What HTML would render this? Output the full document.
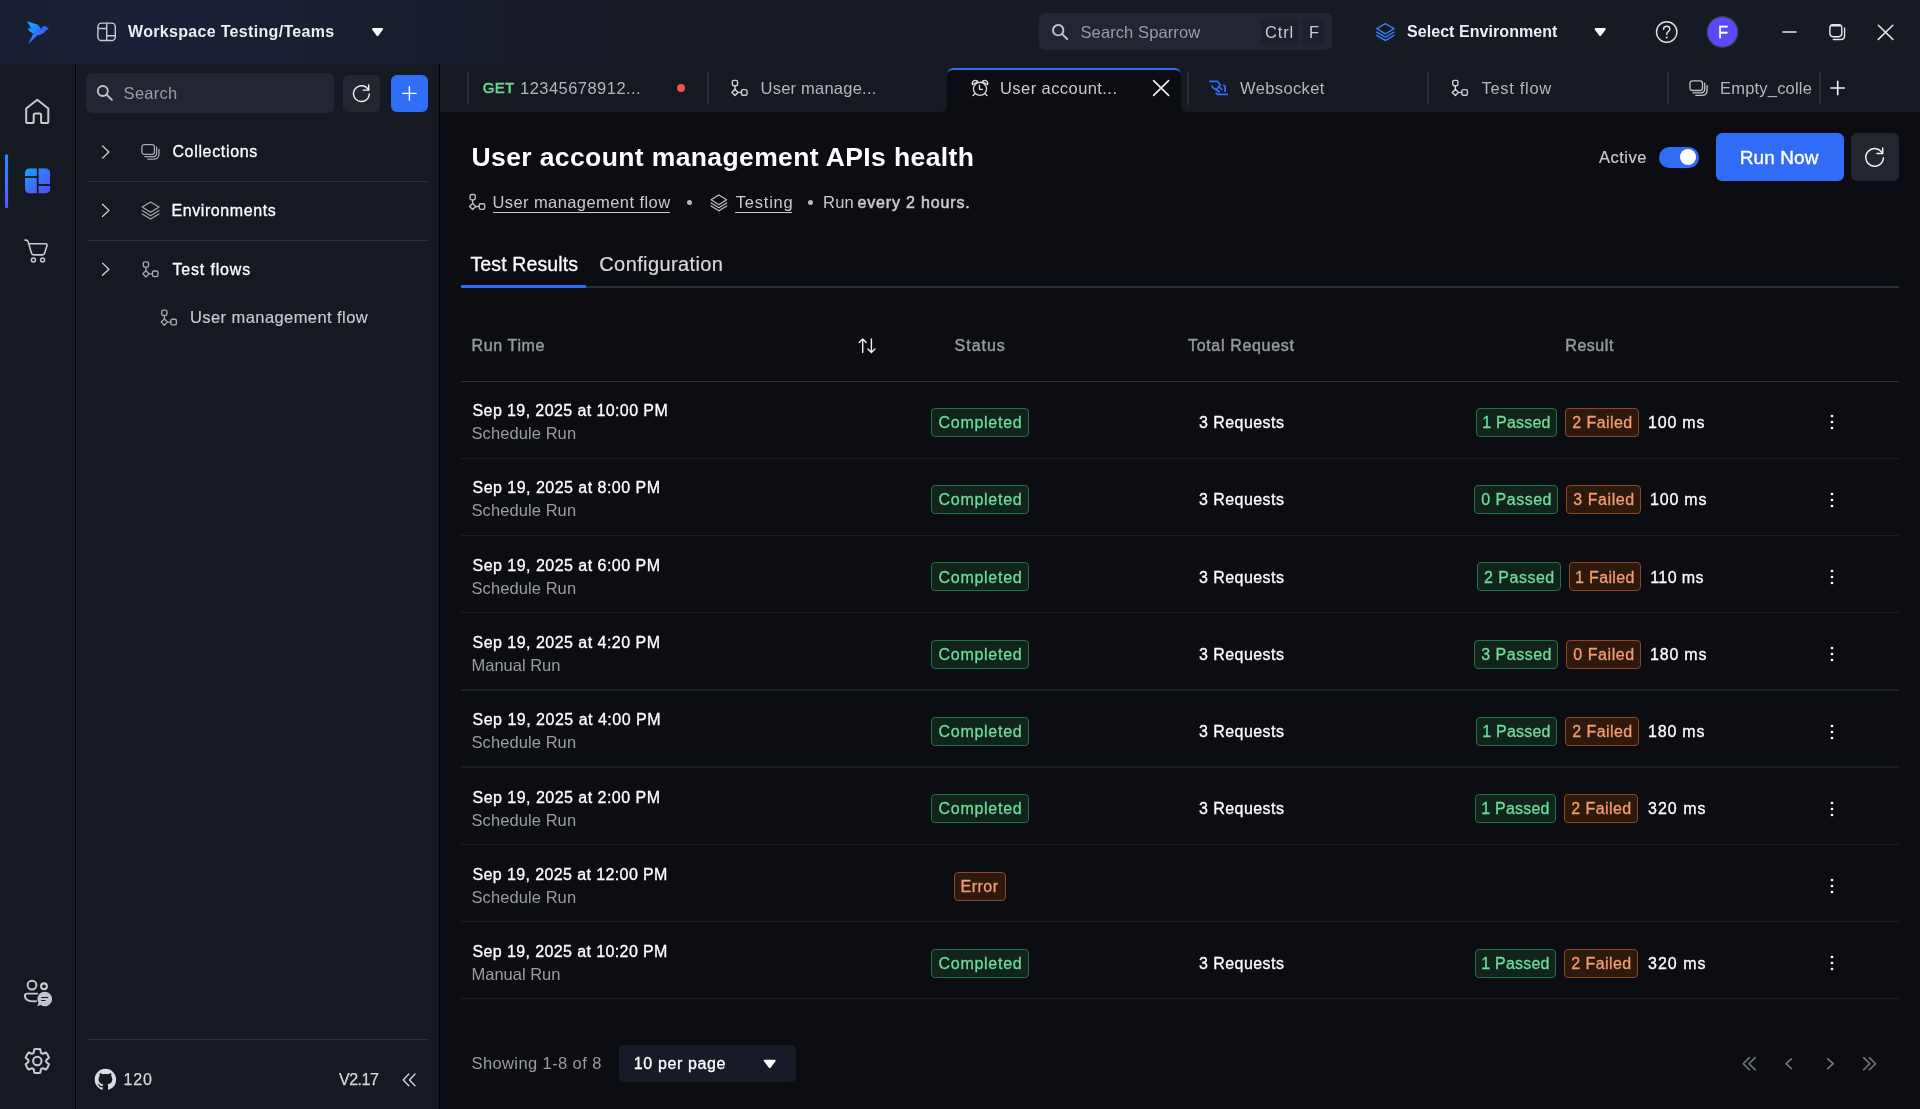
<!DOCTYPE html>
<html><head><meta charset="utf-8"><title>Sparrow</title>
<style>
*{box-sizing:border-box;margin:0;padding:0}
html,body{width:1920px;height:1109px;overflow:hidden;background:#0c0d12}
body{font-family:"Liberation Sans",sans-serif;color:#fff;position:relative}
.a{position:absolute}
#txt{left:0;top:0;width:1920px;height:1109px;will-change:transform}
.t{position:absolute;white-space:pre;line-height:24px;height:24px}
svg{position:absolute;overflow:visible}
#header{left:0;top:0;width:1920px;height:64px;background:linear-gradient(90deg,#181e31 0%,#1a2036 5%,#192034 12%,#181f30 18%,#171d2c 22%,#161b27 26.5%,#161a24 30%,#151a23 34%,#151a23 100%)}
#iconbar{left:0;top:64px;width:75px;height:1045px;background:#151922}
#side{left:76px;top:64px;width:363px;height:1045px;background:#151922}
.vl{background:#000;width:1px;top:64px;height:1045px}
#tabbar{left:440px;top:64px;width:1480px;height:48px;background:#151922}
#main{left:440px;top:112px;width:1480px;height:997px;background:#0c0d12}
.box{border-radius:6px;background:#222630}
.sep{width:2px;background:#282c38;top:71px;height:34px;border-radius:1px}
.hl{height:1.6px;background:#2b2f3a;margin-top:-0.3px}
.rl{height:1.5px;background:#1a1c26;left:461px;width:1438px}
.bp{border:1.2px solid #1f7443;background:#11241b;border-radius:4px;height:29px}
.bf{border:1.2px solid #8c4725;background:#2f180c;border-radius:4px;height:29px}
.g{color:#6fdd99}
.o{color:#f19d6f}
</style>

</head><body>
<div class="a" id="header"></div>
<div class="a" id="iconbar"></div>
<div class="a vl" style="left:75px"></div>
<div class="a" id="side"></div>
<div class="a vl" style="left:439px"></div>
<div class="a" id="tabbar"></div>
<div class="a" id="main"></div>
<svg style="left:0;top:0" width="64" height="64" viewBox="0 0 64 64">
<defs><linearGradient id="gw" x1="27" y1="21" x2="41" y2="33" gradientUnits="userSpaceOnUse"><stop offset="0" stop-color="#16b4ff"/><stop offset="1" stop-color="#2d6cff"/></linearGradient>
<linearGradient id="gb" x1="34" y1="34" x2="49" y2="27" gradientUnits="userSpaceOnUse"><stop offset="0" stop-color="#2d78ff"/><stop offset="1" stop-color="#4458f5"/></linearGradient>
<linearGradient id="gt" x1="36" y1="34" x2="28" y2="44" gradientUnits="userSpaceOnUse"><stop offset="0" stop-color="#3470ff"/><stop offset="1" stop-color="#2a7dff"/></linearGradient></defs>
<path d="M27,21.2 L37.4,24.6 Q40,26.6 41,29.6 L34.2,33.4 Z" fill="url(#gw)"/>
<path d="M27.3,28.5 Q29.5,28 31.6,28.8 L34.4,33.2 L33.2,33.8 Q29.3,31.8 27.3,28.5 Z" fill="#1a9dff"/>
<path d="M33.6,33.6 L40.8,29.6 Q41.8,26.2 45,26 Q47.2,26.3 48.9,29.5 L46.6,30 Q44.4,33.4 39.6,34.9 L36.4,35.3 Z" fill="url(#gb)"/>
<path d="M33.2,33.4 L37.8,35.1 L28.3,43.9 Z" fill="url(#gt)"/>
</svg>
<svg style="left:96px;top:21px" width="22" height="22" viewBox="96 21 22 22" fill="none" stroke="#c9cacd" stroke-width="1.4">
<rect x="97.9" y="23.1" width="17.4" height="17.4" rx="3.6"/><path d="M106.7,23.1V40.5M97.9,28.5H106.7M106.7,35.7H115.3"/></svg>
<div class="a box" style="left:1039px;top:13px;width:293px;height:37px;background:#222633"></div>
<div class="a" style="left:1260.5px;top:19px;width:37.5px;height:26px;border-radius:5px;background:#1d202d"></div>
<div class="a" style="left:1303px;top:19px;width:20.5px;height:26px;border-radius:5px;background:#1d202d"></div>
<div class="a box" style="left:85.5px;top:73.4px;width:248px;height:39.6px"></div>
<div class="a" style="left:343px;top:74.5px;width:37px;height:37.5px;border-radius:5px;background:#232631"></div>
<div class="a" style="left:390.7px;top:74.5px;width:37.3px;height:37.5px;border-radius:6px;background:#306ef6"></div>
<div class="a hl" style="left:87px;top:181px;width:341px"></div>
<div class="a hl" style="left:87px;top:240px;width:341px"></div>
<div class="a hl" style="left:87px;top:1039px;width:341px"></div>
<div class="a sep" style="left:467px"></div>
<div class="a sep" style="left:707px"></div>
<div class="a sep" style="left:1187px"></div>
<div class="a sep" style="left:1427px"></div>
<div class="a sep" style="left:1667px"></div>
<div class="a sep" style="left:1819px"></div>
<div class="a" style="left:947px;top:68px;width:234px;height:44px;background:#0c0d12;border-radius:6px 6px 0 0;border-top:2px solid #316cf6"></div>
<div class="a" style="left:941px;top:106px;width:6px;height:6px;background:#0c0d12"></div><div class="a" style="left:941px;top:106px;width:6px;height:6px;background:#151922;border-bottom-right-radius:5px"></div><div class="a" style="left:1181px;top:106px;width:6px;height:6px;background:#0c0d12"></div><div class="a" style="left:1181px;top:106px;width:6px;height:6px;background:#151922;border-bottom-left-radius:5px"></div>
<div class="a" style="left:676.5px;top:83.5px;width:8.6px;height:8.6px;border-radius:50%;background:#f0544a"></div>
<div class="a" style="left:687px;top:200px;width:5px;height:5px;border-radius:50%;background:#b9babd"></div>
<div class="a" style="left:808px;top:200px;width:5px;height:5px;border-radius:50%;background:#b9babd"></div>
<div class="a" style="left:493.4px;top:212px;width:177px;height:1px;background:#c9cacd"></div>
<div class="a" style="left:735.4px;top:212px;width:56.2px;height:1px;background:#c9cacd"></div>
<div class="a" style="left:1658.7px;top:146.6px;width:40.2px;height:21.2px;border-radius:11px;background:#316cf6"></div>
<div class="a" style="left:1679.8px;top:149px;width:16.4px;height:16.4px;border-radius:50%;background:#fff"></div>
<div class="a" style="left:1716px;top:133.3px;width:128.2px;height:48px;border-radius:6px;background:#316cf6"></div>
<div class="a" style="left:1850.8px;top:133.3px;width:48.2px;height:48px;border-radius:6px;background:#222630"></div>
<div class="a" style="left:461px;top:286.3px;width:1438px;height:1.7px;background:#2a2e38"></div>
<div class="a" style="left:461.4px;top:285px;width:125px;height:3px;background:#316cf6;border-radius:1px"></div>
<div class="a" style="left:461px;top:380.5px;width:1438px;height:1.4px;background:#2a2d38"></div>
<div class="a" style="left:618.5px;top:1045px;width:177.5px;height:37.3px;border-radius:5px;background:#171b27"></div>
<svg style="left:0;top:0;pointer-events:none" width="1920" height="1109" viewBox="0 0 1920 1109"><circle cx="1058.2" cy="30.2" r="5.2" fill="none" stroke="#c2c3c6" stroke-width="1.9"/><path d="M1061.92,33.84 L1067.2,39.0" stroke="#c2c3c6" stroke-width="1.9" stroke-linecap="round"/><circle cx="102.8" cy="91.0" r="5.0" fill="none" stroke="#c2c3c6" stroke-width="1.9"/><path d="M106.38,94.50 L111.8,99.8" stroke="#c2c3c6" stroke-width="1.9" stroke-linecap="round"/><path d="M1385.4,23.6 L1394.0,28.700000000000003 L1385.4,33.8 L1376.8000000000002,28.700000000000003 Z" fill="none" stroke="#3b78f7" stroke-width="1.5" stroke-linejoin="round"/><path d="M1376.8000000000002,32.1 L1385.4,37.199999999999996 L1394.0,32.1" fill="none" stroke="#3b78f7" stroke-width="1.5" stroke-linejoin="round" stroke-linecap="round"/><path d="M1376.8000000000002,35.4 L1385.4,40.49999999999999 L1394.0,35.4" fill="none" stroke="#3b78f7" stroke-width="1.5" stroke-linejoin="round" stroke-linecap="round"/><circle cx="1666.7" cy="32" r="10.2" fill="none" stroke="#e2e2e4" stroke-width="1.4"/><path d="M1663.6,29.2 Q1663.6,26.3 1666.7,26.3 Q1669.8,26.3 1669.8,29 Q1669.8,30.6 1668.2,31.6 Q1666.7,32.6 1666.7,34.4" fill="none" stroke="#e2e2e4" stroke-width="1.4" stroke-linecap="round"/><circle cx="1666.7" cy="37.4" r="1" fill="#e2e2e4"/><circle cx="1722.5" cy="32" r="15.3" fill="#5a4af9" stroke="#3b3f58" stroke-width="1.2"/><path d="M1783,32 H1796" stroke="#e8e8ea" stroke-width="1.5" stroke-linecap="round"/><rect x="1829.9" y="24.8" width="11.9" height="11.9" rx="3.1" fill="none" stroke="#e8e8ea" stroke-width="1.4"/><path d="M1831.5,25.6 H1840.2" stroke="#e8e8ea" stroke-width="1.6" stroke-linecap="round"/><path d="M1844.6,27.9 V35.4 Q1844.6,39.5 1840.5,39.5 H1833.3" fill="none" stroke="#e8e8ea" stroke-width="1.4" stroke-linecap="round"/><path d="M1878.3,25.2 L1892.8,39.4 M1892.8,25.2 L1878.3,39.4" stroke="#e8e8ea" stroke-width="1.5" stroke-linecap="round"/><path d="M26.2,108.5 L37.3,99.8 L48.3,108.5 V121.4 Q48.3,123 46.7,123 H42.7 Q41.1,123 41.1,121.4 V115.2 Q41.1,113.6 39.5,113.6 H35.3 Q33.7,113.6 33.7,115.2 V121.4 Q33.7,123 32.1,123 H27.8 Q26.2,123 26.2,121.4 Z" fill="none" stroke="#c9cacd" stroke-width="2" stroke-linejoin="round"/><defs><linearGradient id="ab" x1="0" y1="154" x2="0" y2="208" gradientUnits="userSpaceOnUse"><stop offset="0" stop-color="#2b8bff"/><stop offset="1" stop-color="#5c58fb"/></linearGradient><linearGradient id="wg" x1="25" y1="168" x2="50" y2="193.5" gradientUnits="userSpaceOnUse"><stop offset="0" stop-color="#1aa5fb"/><stop offset="0.5" stop-color="#3a72f8"/><stop offset="1" stop-color="#5f46f8"/></linearGradient><clipPath id="wc"><rect x="24.9" y="168.2" width="25.4" height="25.3" rx="5"/></clipPath></defs><rect x="5" y="154.3" width="3.1" height="54" rx="1.5" fill="url(#ab)"/><g clip-path="url(#wc)" fill="url(#wg)"><rect x="24.9" y="168.2" width="11.9" height="7.8"/><rect x="24.9" y="177.9" width="11.9" height="15.6"/><rect x="38.6" y="168.2" width="11.7" height="15.8"/><rect x="38.6" y="186" width="11.7" height="7.5"/></g><path d="M25,240.1 H25.8 Q27.7,240.1 28.2,241.9 L31.3,252.6 Q31.9,254.9 34.2,254.9 H42 Q44.3,254.9 44.9,252.6 L47,245.6 Q47.5,243.7 45.6,243.7 H28.9" fill="none" stroke="#c9cacd" stroke-width="1.6" stroke-linecap="round" stroke-linejoin="round"/><circle cx="33.4" cy="259.9" r="2" fill="none" stroke="#c9cacd" stroke-width="1.5"/><circle cx="42.6" cy="259.9" r="2" fill="none" stroke="#c9cacd" stroke-width="1.5"/><circle cx="32" cy="985.1" r="4.4" fill="none" stroke="#c9cacd" stroke-width="1.9"/><circle cx="44" cy="986.3" r="2.9" fill="none" stroke="#c9cacd" stroke-width="2.1"/><path d="M37.2,993.6 H27 Q24.9,993.6 24.9,995.7 C24.9,1000.2 29.5,1001.8 36,1001.2" fill="none" stroke="#c9cacd" stroke-width="1.9" stroke-linecap="round"/><path d="M44.75,991.7 A7.3,7.3 0 1 1 40.6,1005 L37.2,1006.2 L38.5,1002.8 A7.3,7.3 0 0 1 44.75,991.7 Z" fill="#c4c5c8"/><path d="M41.6,997.5 H47.8 M41.6,1000.5 H45" stroke="#151922" stroke-width="1.2" stroke-linecap="round"/><path d="M33.71,1052.75 L34.27,1049.29 A12.1,12.1 0 0 1 40.33,1049.29 L40.89,1052.75 A5.58,5.58 0 0 0 42.65,1053.77 L45.93,1052.52 A12.1,12.1 0 0 1 48.96,1057.77 L46.24,1059.98 A5.58,5.58 0 0 0 46.24,1062.02 L48.96,1064.23 A12.1,12.1 0 0 1 45.93,1069.48 L42.65,1068.23 A5.58,5.58 0 0 0 40.89,1069.25 L40.33,1072.71 A12.1,12.1 0 0 1 34.27,1072.71 L33.71,1069.25 A5.58,5.58 0 0 0 31.95,1068.23 L28.67,1069.48 A12.1,12.1 0 0 1 25.64,1064.23 L28.36,1062.02 A5.58,5.58 0 0 0 28.36,1059.98 L25.64,1057.77 A12.1,12.1 0 0 1 28.67,1052.52 L31.95,1053.77 A5.58,5.58 0 0 0 33.71,1052.75 Z" fill="none" stroke="#c9cacd" stroke-width="2.0" stroke-linejoin="round"/><circle cx="37.3" cy="1061" r="4.2" fill="none" stroke="#c9cacd" stroke-width="2.0"/><path d="M369.29999999999995,94.0 A7.9,7.9 0 1 1 368.50,90.14" fill="none" stroke="#f0f0f1" stroke-width="1.4" stroke-linecap="round"/><path d="M368.70,84.94 V90.14 H363.30" fill="none" stroke="#f0f0f1" stroke-width="1.4" stroke-linecap="round" stroke-linejoin="round"/><path d="M402.7,93.4 H416.1 M409.4,86.7 V100.1" stroke="#fff" stroke-width="1.4" stroke-linecap="round"/><path d="M102.5,145.9 L108.9,152 L102.5,158.1" fill="none" stroke="#d4d4d7" stroke-width="1.3" stroke-linecap="round" stroke-linejoin="round"/><path d="M102.5,204.3 L108.9,210.4 L102.5,216.5" fill="none" stroke="#d4d4d7" stroke-width="1.3" stroke-linecap="round" stroke-linejoin="round"/><path d="M102.5,263.09999999999997 L108.9,269.2 L102.5,275.3" fill="none" stroke="#d4d4d7" stroke-width="1.3" stroke-linecap="round" stroke-linejoin="round"/><g transform="translate(141.3,144.1)" fill="none" stroke="#a6a8ac" stroke-width="1.3" stroke-linecap="round"><rect x="0.6" y="0.6" width="12.5" height="9.6" rx="2.3"/><path d="M15.3,2.8 V8.8 Q15.3,12.6 11.5,12.6 H3.6"/><path d="M17.7,5.2 V9.6 Q17.7,15.1 12.2,15.1 H6.4"/></g><path d="M150.6,202.0 L159.0,207.1 L150.6,212.2 L142.2,207.1 Z" fill="none" stroke="#a6a8ac" stroke-width="1.2" stroke-linejoin="round"/><path d="M142.2,210.6 L150.6,215.7 L159.0,210.6" fill="none" stroke="#a6a8ac" stroke-width="1.2" stroke-linejoin="round" stroke-linecap="round"/><path d="M142.2,213.9 L150.6,219.0 L159.0,213.9" fill="none" stroke="#a6a8ac" stroke-width="1.2" stroke-linejoin="round" stroke-linecap="round"/><g transform="translate(142,261)" fill="none" stroke="#a6a8ac" stroke-width="1.35" stroke-linejoin="round"><rect x="1.35" y="0.8" width="5.2" height="5.3" rx="1.5"/><path d="M3.95,6.1 V9.7 M7.0,12.8 H10.5"/><path d="M3.95,9.7 L7.05,12.8 L3.95,15.9 L0.85,12.8 Z"/><rect x="10.5" y="10.0" width="5.5" height="5.6" rx="1.5"/></g><g transform="translate(160.4,309.3)" fill="none" stroke="#a6a8ac" stroke-width="1.35" stroke-linejoin="round"><rect x="1.35" y="0.8" width="5.2" height="5.3" rx="1.5"/><path d="M3.95,6.1 V9.7 M7.0,12.8 H10.5"/><path d="M3.95,9.7 L7.05,12.8 L3.95,15.9 L0.85,12.8 Z"/><rect x="10.5" y="10.0" width="5.5" height="5.6" rx="1.5"/></g><g transform="translate(94.7,1068.8) scale(1.3375)"><path fill="#dcdcde" d="M8 0C3.58 0 0 3.58 0 8c0 3.54 2.29 6.53 5.47 7.59.4.07.55-.17.55-.38 0-.19-.01-.82-.01-1.49-2.01.37-2.53-.49-2.69-.94-.09-.23-.48-.94-.82-1.13-.28-.15-.68-.52-.01-.53.63-.01 1.08.58 1.23.82.72 1.21 1.87.87 2.33.66.07-.52.28-.87.51-1.07-1.78-.2-3.64-.89-3.64-3.95 0-.87.31-1.59.82-2.15-.08-.2-.36-1.02.08-2.12 0 0 .67-.21 2.2.82.64-.18 1.32-.27 2-.27.68 0 1.36.09 2 .27 1.53-1.04 2.2-.82 2.2-.82.44 1.1.16 1.92.08 2.12.51.56.82 1.27.82 2.15 0 3.07-1.87 3.75-3.65 3.95.29.25.54.73.54 1.48 0 1.07-.01 1.93-.01 2.2 0 .21.15.46.55.38A8.013 8.013 0 0016 8c0-4.42-3.58-8-8-8z"/></g><path d="M408.8,1074.1000000000001 L403.2,1079.9 L408.8,1085.7" fill="none" stroke="#d4d4d7" stroke-width="1.4" stroke-linecap="round" stroke-linejoin="round"/><path d="M415.0,1074.1000000000001 L409.4,1079.9 L415.0,1085.7" fill="none" stroke="#d4d4d7" stroke-width="1.4" stroke-linecap="round" stroke-linejoin="round"/><g transform="translate(731,79.6)" fill="none" stroke="#d0d1d4" stroke-width="1.4000000000000001" stroke-linejoin="round"><rect x="1.35" y="0.8" width="5.2" height="5.3" rx="1.5"/><path d="M3.95,6.1 V9.7 M7.0,12.8 H10.5"/><path d="M3.95,9.7 L7.05,12.8 L3.95,15.9 L0.85,12.8 Z"/><rect x="10.5" y="10.0" width="5.5" height="5.6" rx="1.5"/></g><g transform="translate(1451.4,79.6)" fill="none" stroke="#d0d1d4" stroke-width="1.4000000000000001" stroke-linejoin="round"><rect x="1.35" y="0.8" width="5.2" height="5.3" rx="1.5"/><path d="M3.95,6.1 V9.7 M7.0,12.8 H10.5"/><path d="M3.95,9.7 L7.05,12.8 L3.95,15.9 L0.85,12.8 Z"/><rect x="10.5" y="10.0" width="5.5" height="5.6" rx="1.5"/></g><g transform="translate(1689.4,80.3)" fill="none" stroke="#c0c1c5" stroke-width="1.3" stroke-linecap="round"><rect x="0.6" y="0.6" width="12.5" height="9.6" rx="2.3"/><path d="M15.3,2.8 V8.8 Q15.3,12.6 11.5,12.6 H3.6"/><path d="M17.7,5.2 V9.6 Q17.7,15.1 12.2,15.1 H6.4"/></g><g fill="none" stroke="#dcdcde" stroke-width="1.3" stroke-linecap="round" stroke-linejoin="round"><circle cx="980" cy="88.8" r="6.55"/><path d="M979.5,85.2 V89.4 H982.5"/><path d="M972.5,84.7 A3.1,3.1 0 0 1 977.7,81.5 Z"/><path d="M987.5,84.7 A3.1,3.1 0 0 0 982.3,81.5 Z"/><path d="M975,93.8 L973,95.6 M985,93.8 L987,95.6"/></g><path d="M1153.6,80.6 L1168.6,95.4 M1168.6,80.6 L1153.6,95.4" stroke="#f2f2f3" stroke-width="1.6" stroke-linecap="round"/><g fill="none" stroke="#3070f8" stroke-width="1.75" stroke-linecap="butt" stroke-linejoin="round"><path d="M1209.2,81.3 H1217.3 L1220.5,85 L1215.8,89.8"/><path d="M1212.2,85.3 V86.5 Q1212.3,87.3 1213,87.8 L1220,92.3"/><path d="M1219.5,87.4 L1222.4,89.9"/><path d="M1223.3,84.7 L1225.1,86.6 V92"/><path d="M1215.6,92.5 L1217.5,94.4 H1227.9"/></g><path d="M1831,88 H1844.4 M1837.7,81.3 V94.7" stroke="#f2f2f3" stroke-width="1.6" stroke-linecap="round"/><g transform="translate(468.7,193.7)" fill="none" stroke="#c0c1c5" stroke-width="1.35" stroke-linejoin="round"><rect x="1.35" y="0.8" width="5.2" height="5.3" rx="1.5"/><path d="M3.95,6.1 V9.7 M7.0,12.8 H10.5"/><path d="M3.95,9.7 L7.05,12.8 L3.95,15.9 L0.85,12.8 Z"/><rect x="10.5" y="10.0" width="5.5" height="5.6" rx="1.5"/></g><path d="M718.9,194.9 L726.6999999999999,199.8 L718.9,204.70000000000002 L711.1,199.8 Z" fill="none" stroke="#c0c1c5" stroke-width="1.2" stroke-linejoin="round"/><path d="M711.1,202.9 L718.9,207.8 L726.6999999999999,202.9" fill="none" stroke="#c0c1c5" stroke-width="1.2" stroke-linejoin="round" stroke-linecap="round"/><path d="M711.1,205.9 L718.9,210.8 L726.6999999999999,205.9" fill="none" stroke="#c0c1c5" stroke-width="1.2" stroke-linejoin="round" stroke-linecap="round"/><path d="M1883.3999999999999,157.8 A8.8,8.8 0 1 1 1882.51,153.54" fill="none" stroke="#f0f0f1" stroke-width="1.5" stroke-linecap="round"/><path d="M1882.71,147.94 V153.54 H1876.91" fill="none" stroke="#f0f0f1" stroke-width="1.5" stroke-linecap="round" stroke-linejoin="round"/><g fill="none" stroke="#f0f0f1" stroke-width="1.4" stroke-linecap="round" stroke-linejoin="round"><path d="M862.7,352.4 V339 M859.2,342.4 L862.7,338.9 L866.2,342.4"/><path d="M871.4,339 V352.4 M867.9,349 L871.4,352.5 L874.9,349"/></g><path d="M1749.4,1057.6000000000001 L1743.2,1063.7 L1749.4,1069.8" fill="none" stroke="#74777d" stroke-width="1.6" stroke-linecap="round" stroke-linejoin="round"/><path d="M1755.2,1057.6000000000001 L1749.0,1063.7 L1755.2,1069.8" fill="none" stroke="#74777d" stroke-width="1.6" stroke-linecap="round" stroke-linejoin="round"/><path d="M1791.4,1058.8 L1786.0,1063.7 L1791.4,1068.6" fill="none" stroke="#74777d" stroke-width="1.6" stroke-linecap="round" stroke-linejoin="round"/><path d="M1827.8,1058.8 L1833.2,1063.7 L1827.8,1068.6" fill="none" stroke="#74777d" stroke-width="1.6" stroke-linecap="round" stroke-linejoin="round"/><path d="M1863.6,1057.6000000000001 L1869.8,1063.7 L1863.6,1069.8" fill="none" stroke="#74777d" stroke-width="1.6" stroke-linecap="round" stroke-linejoin="round"/><path d="M1869.3999999999999,1057.6000000000001 L1875.6,1063.7 L1869.3999999999999,1069.8" fill="none" stroke="#74777d" stroke-width="1.6" stroke-linecap="round" stroke-linejoin="round"/><path d="M373.00,29.10 H382.00 L377.50,35.10 Z" fill="#fff" stroke="#fff" stroke-width="2" stroke-linejoin="round"/><path d="M1595.70,29.10 H1604.70 L1600.20,35.10 Z" fill="#fff" stroke="#fff" stroke-width="2" stroke-linejoin="round"/><path d="M764.70,1060.75 H774.70 L769.70,1067.25 Z" fill="#fff" stroke="#fff" stroke-width="2" stroke-linejoin="round"/></svg>
<div class="a bp" style="left:931px;top:407.8px;width:98px"></div><div class="a bp" style="left:1476.0px;top:407.8px;width:81px"></div><div class="a bf" style="left:1565.0px;top:407.8px;width:73.5px"></div><svg style="left:1829px;top:413.3px" width="6" height="18" viewBox="0 0 6 18"><circle cx="3" cy="3" r="1.35" fill="#fff"/><circle cx="3" cy="9" r="1.35" fill="#fff"/><circle cx="3" cy="15" r="1.35" fill="#fff"/></svg><div class="a rl" style="top:457.5px"></div><div class="a bp" style="left:931px;top:485.1px;width:98px"></div><div class="a bp" style="left:1474.0px;top:485.1px;width:84px"></div><div class="a bf" style="left:1566.0px;top:485.1px;width:74.5px"></div><svg style="left:1829px;top:490.6px" width="6" height="18" viewBox="0 0 6 18"><circle cx="3" cy="3" r="1.35" fill="#fff"/><circle cx="3" cy="9" r="1.35" fill="#fff"/><circle cx="3" cy="15" r="1.35" fill="#fff"/></svg><div class="a rl" style="top:534.7px"></div><div class="a bp" style="left:931px;top:562.4px;width:98px"></div><div class="a bp" style="left:1476.75px;top:562.4px;width:84px"></div><div class="a bf" style="left:1568.75px;top:562.4px;width:72px"></div><svg style="left:1829px;top:567.9px" width="6" height="18" viewBox="0 0 6 18"><circle cx="3" cy="3" r="1.35" fill="#fff"/><circle cx="3" cy="9" r="1.35" fill="#fff"/><circle cx="3" cy="15" r="1.35" fill="#fff"/></svg><div class="a rl" style="top:611.9px"></div><div class="a bp" style="left:931px;top:639.7px;width:98px"></div><div class="a bp" style="left:1474.0px;top:639.7px;width:84px"></div><div class="a bf" style="left:1566.0px;top:639.7px;width:74.5px"></div><svg style="left:1829px;top:645.2px" width="6" height="18" viewBox="0 0 6 18"><circle cx="3" cy="3" r="1.35" fill="#fff"/><circle cx="3" cy="9" r="1.35" fill="#fff"/><circle cx="3" cy="15" r="1.35" fill="#fff"/></svg><div class="a rl" style="top:689.1px"></div><div class="a bp" style="left:931px;top:717.0px;width:98px"></div><div class="a bp" style="left:1476.0px;top:717.0px;width:81px"></div><div class="a bf" style="left:1565.0px;top:717.0px;width:73.5px"></div><svg style="left:1829px;top:722.5px" width="6" height="18" viewBox="0 0 6 18"><circle cx="3" cy="3" r="1.35" fill="#fff"/><circle cx="3" cy="9" r="1.35" fill="#fff"/><circle cx="3" cy="15" r="1.35" fill="#fff"/></svg><div class="a rl" style="top:766.3px"></div><div class="a bp" style="left:931px;top:794.3px;width:98px"></div><div class="a bp" style="left:1475.0px;top:794.3px;width:81px"></div><div class="a bf" style="left:1564.0px;top:794.3px;width:73.5px"></div><svg style="left:1829px;top:799.8px" width="6" height="18" viewBox="0 0 6 18"><circle cx="3" cy="3" r="1.35" fill="#fff"/><circle cx="3" cy="9" r="1.35" fill="#fff"/><circle cx="3" cy="15" r="1.35" fill="#fff"/></svg><div class="a rl" style="top:843.5px"></div><div class="a bf" style="left:954px;top:871.5999999999999px;width:52px"></div><svg style="left:1829px;top:877.0999999999999px" width="6" height="18" viewBox="0 0 6 18"><circle cx="3" cy="3" r="1.35" fill="#fff"/><circle cx="3" cy="9" r="1.35" fill="#fff"/><circle cx="3" cy="15" r="1.35" fill="#fff"/></svg><div class="a rl" style="top:920.7px"></div><div class="a bp" style="left:931px;top:948.9000000000001px;width:98px"></div><div class="a bp" style="left:1475.0px;top:948.9000000000001px;width:81px"></div><div class="a bf" style="left:1564.0px;top:948.9000000000001px;width:73.5px"></div><svg style="left:1829px;top:954.4000000000001px" width="6" height="18" viewBox="0 0 6 18"><circle cx="3" cy="3" r="1.35" fill="#fff"/><circle cx="3" cy="9" r="1.35" fill="#fff"/><circle cx="3" cy="15" r="1.35" fill="#fff"/></svg><div class="a rl" style="top:997.9px"></div>
<div class="a" id="txt"><div class="t " style="left:128.00px;top:20px;font-size:16px;font-weight:700;letter-spacing:0.318px;color:#ededee;">Workspace Testing/Teams</div><div class="t " style="left:1080.50px;top:20px;font-size:16.5px;letter-spacing:0.100px;color:#999ca2;">Search Sparrow</div><div class="t " style="left:1265.00px;top:20px;font-size:16.5px;letter-spacing:0.833px;color:#c9cacd;">Ctrl</div><div class="t " style="left:1309.00px;top:20px;font-size:16.5px;letter-spacing:0.000px;color:#c9cacd;">F</div><div class="t " style="left:1407.00px;top:20px;font-size:16px;font-weight:700;letter-spacing:0.059px;color:#ededee;">Select Environment</div><div class="t " style="left:1718.00px;top:20px;font-size:16.5px;-webkit-text-stroke:0.3px;letter-spacing:0.000px;color:#fff;">F</div><div class="t " style="left:482.80px;top:76px;font-size:15px;-webkit-text-stroke:0.55px;letter-spacing:0.300px;color:#69d696;">GET</div><div class="t " style="left:520.00px;top:76px;font-size:16.5px;letter-spacing:0.462px;color:#b4b6ba;">12345678912...</div><div class="t " style="left:760.50px;top:76px;font-size:16.5px;letter-spacing:0.231px;color:#b4b6ba;">User manage...</div><div class="t " style="left:1000.00px;top:76px;font-size:16.5px;letter-spacing:0.429px;color:#c9cacd;">User account...</div><div class="t " style="left:1240.00px;top:76px;font-size:16.5px;letter-spacing:0.375px;color:#b4b6ba;">Websocket</div><div class="t " style="left:1481.50px;top:76px;font-size:16.5px;letter-spacing:0.688px;color:#b4b6ba;">Test flow</div><div class="t " style="left:1720.00px;top:76px;font-size:16.5px;letter-spacing:0.200px;color:#b4b6ba;">Empty_colle</div><div class="t " style="left:123.60px;top:81px;font-size:16.5px;letter-spacing:0.280px;color:#999ca2;">Search</div><div class="t " style="left:172.40px;top:140px;font-size:16px;-webkit-text-stroke:0.3px;letter-spacing:0.660px;color:#fff;">Collections</div><div class="t " style="left:171.40px;top:199px;font-size:16px;-webkit-text-stroke:0.3px;letter-spacing:0.600px;color:#fff;">Environments</div><div class="t " style="left:172.40px;top:258px;font-size:16px;-webkit-text-stroke:0.3px;letter-spacing:0.844px;color:#fff;">Test flows</div><div class="t " style="left:190.00px;top:305px;font-size:16.5px;-webkit-text-stroke:0.15px;letter-spacing:0.421px;color:#c9cacd;">User management flow</div><div class="t " style="left:123.50px;top:1068px;font-size:16px;-webkit-text-stroke:0.25px;letter-spacing:0.875px;color:#d6d6d9;">120</div><div class="t " style="left:339.00px;top:1068px;font-size:16px;-webkit-text-stroke:0.25px;letter-spacing:-0.500px;color:#d6d6d9;">V2.17</div><div class="t " style="left:471.50px;top:139px;font-size:26.5px;font-weight:700;letter-spacing:0.382px;color:#fff;line-height:36px;height:36px;">User account management APIs health</div><div class="t " style="left:492.40px;top:190px;font-size:16.5px;letter-spacing:0.421px;color:#c9cacd;">User management flow</div><div class="t " style="left:735.70px;top:190px;font-size:16.5px;letter-spacing:0.800px;color:#c9cacd;">Testing</div><div class="t " style="left:823.00px;top:190px;font-size:16.5px;letter-spacing:0.250px;color:#c9cacd;">Run</div><div class="t " style="left:857.50px;top:191px;font-size:16px;-webkit-text-stroke:0.55px;letter-spacing:0.831px;color:#c9cacd;">every 2 hours.</div><div class="t " style="left:470.50px;top:250px;font-size:19.5px;-webkit-text-stroke:0.3px;letter-spacing:0.118px;color:#fff;line-height:28px;height:28px;">Test Results</div><div class="t " style="left:599.30px;top:250px;font-size:20px;-webkit-text-stroke:0.2px;letter-spacing:0.383px;color:#d9d9dc;line-height:28px;height:28px;">Configuration</div><div class="t " style="left:1599.00px;top:145px;font-size:16.5px;-webkit-text-stroke:0.2px;letter-spacing:0.500px;color:#c9cacd;">Active</div><div class="t " style="left:1739.70px;top:144px;font-size:19px;-webkit-text-stroke:0.4px;letter-spacing:0.100px;color:#fff;line-height:28px;height:28px;">Run Now</div><div class="t " style="left:471.50px;top:334px;font-size:16px;-webkit-text-stroke:0.45px;letter-spacing:0.643px;color:#9699a0;">Run Time</div><div class="t " style="left:954.60px;top:334px;font-size:16px;-webkit-text-stroke:0.45px;letter-spacing:0.980px;color:#9699a0;">Status</div><div class="t " style="left:1188.00px;top:334px;font-size:16px;-webkit-text-stroke:0.45px;letter-spacing:0.667px;color:#9699a0;">Total Request</div><div class="t " style="left:1565.30px;top:334px;font-size:16px;-webkit-text-stroke:0.45px;letter-spacing:0.540px;color:#9699a0;">Result</div><div class="t " style="left:472.50px;top:399px;font-size:16px;-webkit-text-stroke:0.3px;letter-spacing:0.404px;color:#fff;">Sep 19, 2025 at 10:00 PM</div><div class="t " style="left:471.50px;top:421px;font-size:16.5px;letter-spacing:0.082px;color:#999ca2;">Schedule Run</div><div class="t g" style="left:938.50px;top:411px;font-size:16px;-webkit-text-stroke:0.3px;letter-spacing:0.725px;">Completed</div><div class="t " style="left:1199.00px;top:411px;font-size:16px;-webkit-text-stroke:0.3px;letter-spacing:0.444px;color:#fff;">3 Requests</div><div class="t g" style="left:1482.20px;top:411px;font-size:16px;-webkit-text-stroke:0.3px;letter-spacing:0.229px;">1 Passed</div><div class="t o" style="left:1572.20px;top:411px;font-size:16px;-webkit-text-stroke:0.3px;letter-spacing:0.443px;">2 Failed</div><div class="t " style="left:1648.00px;top:411px;font-size:16px;-webkit-text-stroke:0.3px;letter-spacing:0.800px;color:#fff;">100 ms</div><div class="t " style="left:472.50px;top:476px;font-size:16px;-webkit-text-stroke:0.3px;letter-spacing:0.477px;color:#fff;">Sep 19, 2025 at 8:00 PM</div><div class="t " style="left:471.50px;top:498px;font-size:16.5px;letter-spacing:0.082px;color:#999ca2;">Schedule Run</div><div class="t g" style="left:938.50px;top:488px;font-size:16px;-webkit-text-stroke:0.3px;letter-spacing:0.725px;">Completed</div><div class="t " style="left:1199.00px;top:488px;font-size:16px;-webkit-text-stroke:0.3px;letter-spacing:0.444px;color:#fff;">3 Requests</div><div class="t g" style="left:1481.20px;top:488px;font-size:16px;-webkit-text-stroke:0.3px;letter-spacing:0.514px;">0 Passed</div><div class="t o" style="left:1573.20px;top:488px;font-size:16px;-webkit-text-stroke:0.3px;letter-spacing:0.586px;">3 Failed</div><div class="t " style="left:1650.00px;top:488px;font-size:16px;-webkit-text-stroke:0.3px;letter-spacing:0.800px;color:#fff;">100 ms</div><div class="t " style="left:472.50px;top:554px;font-size:16px;-webkit-text-stroke:0.3px;letter-spacing:0.477px;color:#fff;">Sep 19, 2025 at 6:00 PM</div><div class="t " style="left:471.50px;top:576px;font-size:16.5px;letter-spacing:0.082px;color:#999ca2;">Schedule Run</div><div class="t g" style="left:938.50px;top:566px;font-size:16px;-webkit-text-stroke:0.3px;letter-spacing:0.725px;">Completed</div><div class="t " style="left:1199.00px;top:566px;font-size:16px;-webkit-text-stroke:0.3px;letter-spacing:0.444px;color:#fff;">3 Requests</div><div class="t g" style="left:1483.95px;top:566px;font-size:16px;-webkit-text-stroke:0.3px;letter-spacing:0.514px;">2 Passed</div><div class="t o" style="left:1574.95px;top:566px;font-size:16px;-webkit-text-stroke:0.3px;letter-spacing:0.371px;">1 Failed</div><div class="t " style="left:1650.25px;top:566px;font-size:16px;-webkit-text-stroke:0.3px;letter-spacing:0.400px;color:#fff;">110 ms</div><div class="t " style="left:472.50px;top:631px;font-size:16px;-webkit-text-stroke:0.3px;letter-spacing:0.477px;color:#fff;">Sep 19, 2025 at 4:20 PM</div><div class="t " style="left:471.50px;top:653px;font-size:16.5px;letter-spacing:0.000px;color:#999ca2;">Manual Run</div><div class="t g" style="left:938.50px;top:643px;font-size:16px;-webkit-text-stroke:0.3px;letter-spacing:0.725px;">Completed</div><div class="t " style="left:1199.00px;top:643px;font-size:16px;-webkit-text-stroke:0.3px;letter-spacing:0.444px;color:#fff;">3 Requests</div><div class="t g" style="left:1481.20px;top:643px;font-size:16px;-webkit-text-stroke:0.3px;letter-spacing:0.514px;">3 Passed</div><div class="t o" style="left:1573.20px;top:643px;font-size:16px;-webkit-text-stroke:0.3px;letter-spacing:0.586px;">0 Failed</div><div class="t " style="left:1650.00px;top:643px;font-size:16px;-webkit-text-stroke:0.3px;letter-spacing:0.800px;color:#fff;">180 ms</div><div class="t " style="left:472.50px;top:708px;font-size:16px;-webkit-text-stroke:0.3px;letter-spacing:0.500px;color:#fff;">Sep 19, 2025 at 4:00 PM</div><div class="t " style="left:471.50px;top:730px;font-size:16.5px;letter-spacing:0.082px;color:#999ca2;">Schedule Run</div><div class="t g" style="left:938.50px;top:720px;font-size:16px;-webkit-text-stroke:0.3px;letter-spacing:0.725px;">Completed</div><div class="t " style="left:1199.00px;top:720px;font-size:16px;-webkit-text-stroke:0.3px;letter-spacing:0.444px;color:#fff;">3 Requests</div><div class="t g" style="left:1482.20px;top:720px;font-size:16px;-webkit-text-stroke:0.3px;letter-spacing:0.229px;">1 Passed</div><div class="t o" style="left:1572.20px;top:720px;font-size:16px;-webkit-text-stroke:0.3px;letter-spacing:0.443px;">2 Failed</div><div class="t " style="left:1648.00px;top:720px;font-size:16px;-webkit-text-stroke:0.3px;letter-spacing:0.800px;color:#fff;">180 ms</div><div class="t " style="left:472.50px;top:786px;font-size:16px;-webkit-text-stroke:0.3px;letter-spacing:0.477px;color:#fff;">Sep 19, 2025 at 2:00 PM</div><div class="t " style="left:471.50px;top:808px;font-size:16.5px;letter-spacing:0.082px;color:#999ca2;">Schedule Run</div><div class="t g" style="left:938.50px;top:797px;font-size:16px;-webkit-text-stroke:0.3px;letter-spacing:0.725px;">Completed</div><div class="t " style="left:1199.00px;top:797px;font-size:16px;-webkit-text-stroke:0.3px;letter-spacing:0.444px;color:#fff;">3 Requests</div><div class="t g" style="left:1481.20px;top:797px;font-size:16px;-webkit-text-stroke:0.3px;letter-spacing:0.229px;">1 Passed</div><div class="t o" style="left:1571.20px;top:797px;font-size:16px;-webkit-text-stroke:0.3px;letter-spacing:0.443px;">2 Failed</div><div class="t " style="left:1648.00px;top:797px;font-size:16px;-webkit-text-stroke:0.3px;letter-spacing:1.000px;color:#fff;">320 ms</div><div class="t " style="left:472.50px;top:863px;font-size:16px;-webkit-text-stroke:0.3px;letter-spacing:0.391px;color:#fff;">Sep 19, 2025 at 12:00 PM</div><div class="t " style="left:471.50px;top:885px;font-size:16.5px;letter-spacing:0.082px;color:#999ca2;">Schedule Run</div><div class="t o" style="left:960.50px;top:875px;font-size:16px;-webkit-text-stroke:0.3px;letter-spacing:0.500px;">Error</div><div class="t " style="left:472.50px;top:940px;font-size:16px;-webkit-text-stroke:0.3px;letter-spacing:0.391px;color:#fff;">Sep 19, 2025 at 10:20 PM</div><div class="t " style="left:471.50px;top:962px;font-size:16.5px;letter-spacing:0.000px;color:#999ca2;">Manual Run</div><div class="t g" style="left:938.50px;top:952px;font-size:16px;-webkit-text-stroke:0.3px;letter-spacing:0.725px;">Completed</div><div class="t " style="left:1199.00px;top:952px;font-size:16px;-webkit-text-stroke:0.3px;letter-spacing:0.444px;color:#fff;">3 Requests</div><div class="t g" style="left:1481.20px;top:952px;font-size:16px;-webkit-text-stroke:0.3px;letter-spacing:0.229px;">1 Passed</div><div class="t o" style="left:1571.20px;top:952px;font-size:16px;-webkit-text-stroke:0.3px;letter-spacing:0.443px;">2 Failed</div><div class="t " style="left:1648.00px;top:952px;font-size:16px;-webkit-text-stroke:0.3px;letter-spacing:1.000px;color:#fff;">320 ms</div><div class="t " style="left:471.50px;top:1051px;font-size:16.5px;letter-spacing:0.400px;color:#999ca2;">Showing 1-8 of 8</div><div class="t " style="left:633.80px;top:1052px;font-size:16px;-webkit-text-stroke:0.3px;letter-spacing:0.620px;color:#fff;">10 per page</div></div>
</body></html>
